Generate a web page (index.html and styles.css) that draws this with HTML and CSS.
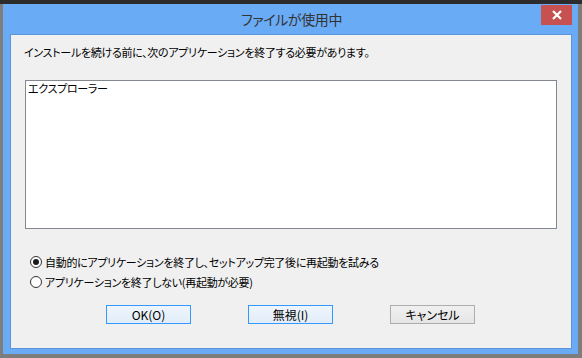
FILE: index.html
```html
<!DOCTYPE html>
<html lang="ja">
<head>
<meta charset="utf-8">
<link rel="stylesheet" href="styles.css">
</head>
<body>
<div class="desktop">
  <div class="window">
    <div class="titlebar">
      <span class="title">ファイルが使用中</span>
      <div class="close">
        <svg width="12" height="10" viewBox="0 0 12 10"><path d="M2 1 L10 9 M10 1 L2 9" stroke="#fff" stroke-width="2.2" fill="none"/></svg>
      </div>
    </div>
    <div class="panel">
      <p class="message">インストールを続ける前に、次のアプリケーションを終了する必要があります。</p>
      <div class="listbox">
        <div class="item">エクスプローラー</div>
      </div>
      <div class="options">
        <label class="option"><span class="radio checked"></span>自動的にアプリケーションを終了し、セットアップ完了後に再起動を試みる</label>
        <label class="option"><span class="radio"></span>アプリケーションを終了しない(再起動が必要)</label>
      </div>
      <div class="buttons">
        <div class="btn focus">OK(O)</div>
        <div class="btn focus">無視(I)</div>
        <div class="btn">キャンセル</div>
      </div>
    </div>
  </div>
</div>
</body>
</html>
```

FILE: styles.css
```css
* { box-sizing: border-box; }
html, body { margin: 0; padding: 0; }
body {
  width: 582px;
  height: 358px;
  overflow: hidden;
  background: #5e5e5e;
  font-family: "Noto Sans CJK JP", "Noto Sans", sans-serif;
  font-feature-settings: "palt";
}
.desktop {
  width: 582px;
  height: 358px;
  background: linear-gradient(#2c2c2c 0 4px, #7d7d7d 4px);
  padding: 4px 4px 4px 3px;
}
.window {
  width: 575px;
  height: 350px;
  background: #6aabf6;
  display: flex;
  flex-direction: column;
  position: relative;
}
.titlebar {
  height: 30px;
  flex: none;
  display: flex;
  align-items: center;
  justify-content: center;
}
.title {
  font-size: 14px;
  letter-spacing: -0.4px;
  color: #333;
  line-height: 30px;
  padding-left: 2px;
}
.close {
  position: absolute;
  top: 1px;
  right: 6px;
  width: 31px;
  height: 20px;
  background: #c75050;
  display: flex;
  align-items: center;
  justify-content: center;
}
.panel {
  flex: 1;
  margin: 0 6px 5px 7px;
  background: #f0f0f0;
  border: 1px solid #5d95d8;
  padding: 8px 14px 0 14px;
  display: flex;
  flex-direction: column;
}
.message {
  margin: 0 0 0 -1px;
  font-size: 11px;
  letter-spacing: -0.3px;
  line-height: 18px;
  color: #000;
}
.listbox {
  margin-top: 19px;
  width: 532px;
  height: 149px;
  background: #fff;
  border: 1px solid #828790;
  padding: 0 2px;
}
.item {
  font-size: 11px;
  letter-spacing: -0.3px;
  line-height: 15px;
  color: #000;
}
.options {
  margin-top: 24px;
  display: flex;
  flex-direction: column;
  gap: 2px;
}
.option {
  display: flex;
  align-items: center;
  font-size: 11px;
  letter-spacing: -0.3px;
  line-height: 18px;
  color: #000;
  padding-left: 5px;
}
.radio {
  width: 12px;
  height: 12px;
  border-radius: 50%;
  border: 1px solid #333;
  background: #fff;
  margin-right: 3px;
  display: flex;
  align-items: center;
  justify-content: center;
}
.radio.checked::after {
  content: "";
  width: 6px;
  height: 6px;
  border-radius: 50%;
  background: #1a1a1a;
}
.buttons {
  margin-top: 14px;
  display: flex;
  gap: 57px;
  padding-left: 81px;
}
.btn {
  width: 85px;
  height: 19px;
  border: 1px solid #adadad;
  background: linear-gradient(#f0f0f0, #e5e5e5);
  font-size: 12px;
  line-height: 17px;
  text-align: center;
  color: #000;
}
.btn.focus {
  border-color: #3399ff;
  background: linear-gradient(#eef5fc, #e2edf9);
}
```
